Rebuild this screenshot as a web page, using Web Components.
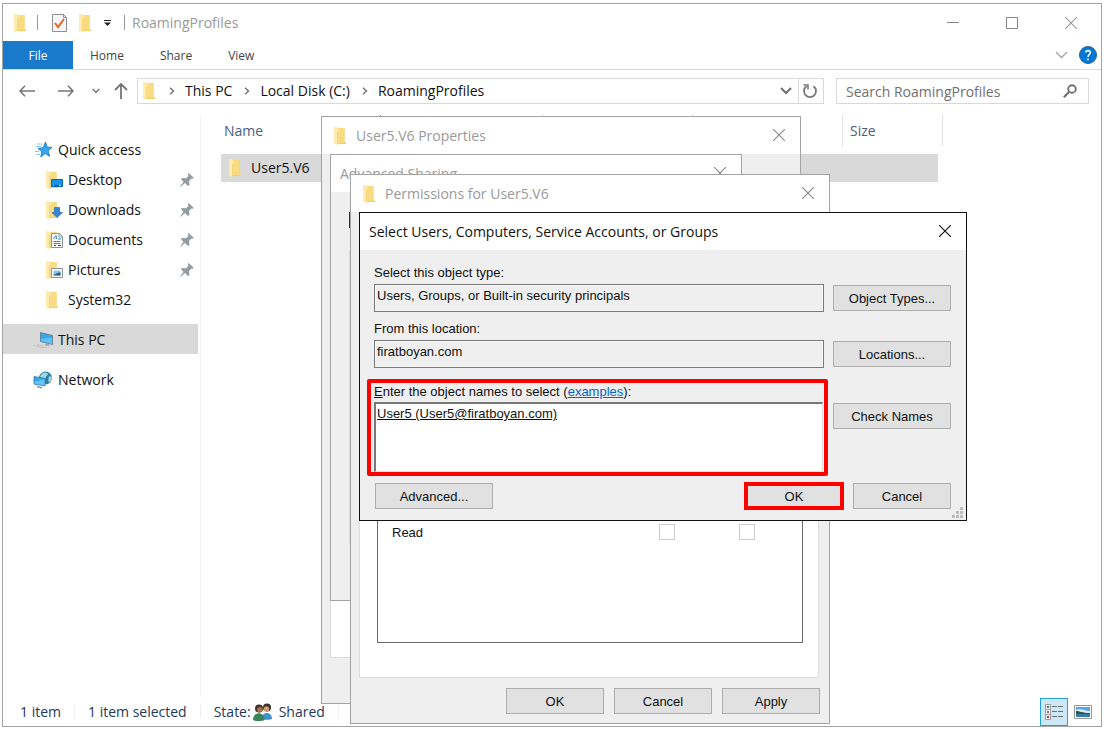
<!DOCTYPE html>
<html lang="en">
<head>
<meta charset="utf-8">
<title>RoamingProfiles</title>
<style>
  html, body { height: 100%; margin: 0; }
  body {
    box-sizing: border-box;
    padding: 3px 4px 2px 2px;
    background: #fff;
    color: #111;
    font: 14px/20px "Open Sans", "Noto Sans", sans-serif;
    --classic: 13px/16px "Liberation Sans", Arial, sans-serif;
    --frame: #a3a3a3;
    --face: #efefef;
  }
  dialog-window { position: absolute; }
  #properties { left: 321px; top: 116px; width: 480px; height: 588px; }
  #sharing { left: 330px; top: 154px; width: 412px; height: 447px; }
  #permissions { left: 350px; top: 174px; width: 480px; height: 550px; }
  #select { left: 359px; top: 212px; width: 608px; }
</style>
</head>
<body>
<file-explorer></file-explorer>

<dialog-window id="properties" heading="User5.V6 Properties" folder inactive>
  <properties-page></properties-page>
</dialog-window>
<dialog-window id="sharing" heading="Advanced Sharing" inactive>
  <sharing-page></sharing-page>
</dialog-window>
<dialog-window id="permissions" heading="Permissions for User5.V6" folder inactive>
  <permissions-page></permissions-page>
</dialog-window>
<dialog-window id="select" heading="Select Users, Computers, Service Accounts, or Groups">
  <object-picker></object-picker>
</dialog-window>

<script>
const BASE = '*{box-sizing:border-box} button{margin:0;padding:0;border:0;background:none;font:inherit;color:inherit} svg{display:block}';

function define(tag, css, html, setup) {
  const template = document.createElement('template');
  template.innerHTML = `<style>${BASE}${css}</style>${html}`;
  customElements.define(tag, class extends HTMLElement {
    connectedCallback() {
      if (this.shadowRoot) return;
      this.attachShadow({ mode: 'open' }).append(template.content.cloneNode(true));
      if (setup) setup(this, this.shadowRoot);
    }
  });
}

const FOLDER = '<path d="M3 1h7.500v14H12v2H3z" fill="#f3cf6a"/><path d="M4 1h6.500v14H12v1H4z" fill="#f9db82"/><path d="M0 0h3l1.500 2v13L3 18l-3-1z" fill="#ffebad"/><path d="M3 4l1.500 1v10L3 18z" fill="#f5d680"/>';
const ICONS = {
  folder: [12, 18, FOLDER],
  checkdoc: [15, 18, '<path d="M.5.500h11l3 3v14H.500z" fill="#f7f7fa" stroke="#8f8f8f"/><path d="M11.500.500v3h3" fill="none" stroke="#8f8f8f"/><path d="M3 9l3 4 6-8" fill="none" stroke="#f0601c" stroke-width="2"/>'],
  overflow: [7, 6, '<path d="M0 .500h7" stroke="#222"/><path d="M0 2.500h7L3.500 6z" fill="#222"/>'],
  min: [12, 12, '<path d="M0 5.500h12" stroke="#888"/>'],
  max: [12, 12, '<path d="M.5.500h11v11H.500z" fill="none" stroke="#888"/>'],
  close: [12, 12, '<path d="M0 0l12 12M12 0L0 12" stroke="currentColor" stroke-width="1.100"/>'],
  expand: [13, 8, '<path d="M1 1l5.500 5.500L12 1" fill="none" stroke="#a3a3a3" stroke-width="1.300"/>'],
  help: [18, 18, '<circle cx="9" cy="9" r="8.500" fill="#0078d7" stroke="#2a5f94"/><path d="M6.500 6.500C7 3.800 11.500 4 11.300 6.800 11.200 8.500 9 8.600 9 11M9 12.500v1.700" fill="none" stroke="#fff" stroke-width="1.600"/>'],
  back: [16, 12, '<path d="M6 .800L1 6l5 5.200M1 6h15" fill="none" stroke="#757575" stroke-width="1.600"/>'],
  forward: [16, 12, '<path d="M10 .800L15 6l-5 5.200M15 6H0" fill="none" stroke="#757575" stroke-width="1.600"/>'],
  recent: [8, 6, '<path d="M.7 1L4 4.400 7.300 1" fill="none" stroke="#777" stroke-width="1.500"/>'],
  up: [14, 16, '<path d="M1 7l6-6 6 6M7 1v15" fill="none" stroke="#757575" stroke-width="1.800"/>'],
  crumb: [6, 8, '<path d="M1 .700L4.500 4 1 7.300" fill="none" stroke="#777" stroke-width="1.500"/>'],
  down: [12, 8, '<path d="M1 1l5 5 5-5" fill="none" stroke="#707070" stroke-width="2"/>'],
  refresh: [16, 16, '<path d="M4.500 3.200A6 6 0 1 0 11.500 3.200" fill="none" stroke="#777" stroke-width="1.800"/><path d="M1.500 2h4.500v4.500" fill="none" stroke="#777" stroke-width="1.600"/>'],
  search: [14, 14, '<circle cx="9" cy="5" r="3.800" fill="none" stroke="#707070" stroke-width="1.900"/><path d="M6.300 7.700L.8 13.200" stroke="#707070" stroke-width="2.200"/>'],
  star: [17, 16, '<path d="M10.500 0l1.700 5 4.800.400-3.800 3.400 1.500 5.500-4.500-2.800L5.800 15l1-5.200L3 6.500l5-.800z" fill="#35a5ee" stroke="#1877bd" stroke-width=".8"/><path d="M2 2h5M1 4.500h5M0 9.500h4M1 12.500h4" stroke="#8cc8f0"/>'],
  desktop: [17, 18, FOLDER + '<path d="M5.500 8.500h11v7h-11z" fill="#1594f0" stroke="#0b68ad"/><path d="M6 14.500h10" stroke="#0a4f8c"/><path d="M7 14.500h1M13 14.500h2" stroke="#bfe2ff"/>'],
  downloads: [17, 18, FOLDER + '<path d="M8.500 6.500h5v5h3L11 16.500 6 11.500h2.500z" fill="#3385d9" stroke="#2767ad" stroke-width=".7"/>'],
  documents: [17, 18, FOLDER + '<path d="M5.500 2.500h8l3 3v11h-11z" fill="#fff" stroke="#84939c"/><path d="M13 3v3h3" fill="none" stroke="#84939c"/><path d="M7.500 8L10 4.500 10.500 8M12 8h3M7.500 10.500h7M7.500 12.500h7" fill="none" stroke="#258bd2"/><path d="M8 14.500h2M12 14.500h3" stroke="#345"/>'],
  pictures: [17, 18, FOLDER + '<path d="M5.500 7.500h11v9h-11z" fill="#fff" stroke="#899299"/><path d="M7.500 9.500h7v5h-7z" fill="#8dc6ed"/><path d="M7.500 13.500c3 0 3-2 7-2v3h-7z" fill="#245b78"/>'],
  pc: [20, 18, '<path d="M7.500 1.500L19.500 4.500V13.500L7.500 10.500z" fill="#38a8ed" stroke="#5c7888" stroke-width=".8"/><path d="M8 8L19 6.500V13L8 10z" fill="#62c0fa"/><path d="M12 12.200l4 1v2l-4-1z" fill="#9aa7ae"/><path d="M0 14l10 3 4-1M4 13.500l7 2" fill="none" stroke="#b4bcc1" stroke-width=".8"/>'],
  network: [20, 18, '<circle cx="12.500" cy="7" r="6.500" fill="#2f7f9f"/><path d="M9 2.500c3-2 6-1 6 1l-2 2-1 3-3-1-2-2zM16 5l3 1-1 4-3 1z" fill="#9fd7e6"/><path d="M1 5.500l11 2v7.500L1 13z" fill="#35a8ee" stroke="#3f7798" stroke-width=".8"/><path d="M1.500 11L11.500 8.300V14.500l-10-2z" fill="#66c3fa"/><path d="M4 15.500l5 1.500" stroke="#8a979e" stroke-width="1.500"/>'],
  pin: [14, 14, '<path d="M8.500 0L13.500 4.500 12.500 6 11.500 5.500 9 8l.5 4-1.500 1L5 10 1 13.500 0 13.500 3.500 9 1 6 2 5l4 .300L8.500 3 7.800 1z" fill="#919ca3"/>'],
  people: [20, 18, '<circle cx="14" cy="4.500" r="4" fill="#3b3028"/><circle cx="13.500" cy="6" r="2.700" fill="#d29b70"/><path d="M8.500 16c0-8 10.500-8 10.500 0-2 1-8.500 1-10.500 0z" fill="#3f91cf"/><circle cx="6" cy="5.500" r="4" fill="#40342b"/><circle cx="6.800" cy="6.800" r="2.700" fill="#ad7047"/><path d="M0 17c0-9 11.500-9 11.500 0-2 1.300-9.500 1.300-11.500 0z" fill="#35865a"/>'],
  details: [18, 16, '<path d="M.5.500h5v5h-5zM.500 5.500h5v5h-5zM.500 10.500h5v5h-5z" fill="#fff" stroke="#9a9a9a"/><path d="M2 3h2" stroke="#2e6f9e" stroke-width="2"/><path d="M2 8h2" stroke="#a95b3b" stroke-width="2"/><path d="M2 13h2" stroke="#c32626" stroke-width="2"/><path d="M7 2.500h5M13 2.500h5M7 7.500h5M13 7.500h5M7 12.500h5M13 12.500h5" stroke="#707070"/>'],
  thumbs: [18, 14, '<path d="M.5.500h17v13H.500z" fill="#fff" stroke="#999"/><path d="M2 2h14v10H2z" fill="#5ba4ea"/><path d="M2 5c5-2 8 1 14 1v3H2z" fill="#dcebf5"/><path d="M2 6c4 0 6 2 14 2v1H2z" fill="#275c4d"/><path d="M2 9h14v3H2z" fill="#3878aa"/>'],
  sort: [9, 5, '<path d="M.5 4.500l4-4 4 4" fill="none" stroke="#555"/>'],
  grip: [11, 11, '<path d="M8 0h3v3H8zM4 4h3v3H4zM8 4h3v3H8zM0 8h3v3H0zM4 8h3v3H4zM8 8h3v3H8z" fill="#bdbdbd"/>']
};

define('ui-icon', ':host{display:inline-block;flex:none}', '<svg aria-hidden="true"></svg>', (host, root) => {
  const [w, h, body] = ICONS[host.getAttribute('name')];
  const svg = root.querySelector('svg');
  svg.setAttribute('viewBox', `0 0 ${w} ${h}`);
  svg.setAttribute('width', w);
  svg.setAttribute('height', h);
  svg.innerHTML = body;
});

define('title-bar', `
  :host{display:flex;align-items:center;height:37px;padding:0 1px 0 11px;color:#999}
  i{width:1px;height:15px;background:#999}
  .quick{display:flex;align-items:center}
  .quick i:first-of-type{margin:0 14px 0 11px}
  .quick ui-icon:nth-of-type(3){margin:0 13px 0 12px}
  .quick i:last-of-type{margin:0 7px 0 13px}
  .controls{display:flex;margin-left:auto}
  button{width:59px;height:37px;display:grid;place-items:center}`, `
  <div class="quick">
    <ui-icon name="folder"></ui-icon><i></i><ui-icon name="checkdoc"></ui-icon>
    <ui-icon name="folder"></ui-icon><ui-icon name="overflow"></ui-icon><i></i>
  </div>
  <span>RoamingProfiles</span>
  <div class="controls">
    <button aria-label="Minimize"><ui-icon name="min"></ui-icon></button>
    <button aria-label="Maximize"><ui-icon name="max"></ui-icon></button>
    <button aria-label="Close"><ui-icon name="close"></ui-icon></button>
  </div>`);

define('ribbon-tabs', `
  :host{display:flex;align-items:stretch;height:29px;border-bottom:1px solid #dadada;font-size:12px;color:#444}
  button{padding:2px 19px 0 17px}
  .file{width:70px;padding:2px 0 0;background:#1979ca;color:#fff}
  .end{display:flex;align-items:center;gap:11px;margin-left:auto;padding-right:4px}
  .end button{display:grid;padding:0}`, `
  <button class="file">File</button><button>Home</button><button>Share</button><button>View</button>
  <div class="end">
    <button aria-label="Expand the ribbon"><ui-icon name="expand"></ui-icon></button>
    <button aria-label="Help"><ui-icon name="help"></ui-icon></button>
  </div>`);

define('address-row', `
  :host{display:grid;grid-template-columns:48px 30px 30px 20px minmax(0,1fr) 253px;align-items:center;height:40px;padding:2px 12px 0 0}
  button{display:grid;place-items:center;height:24px}
  .bar,.search{display:flex;align-items:center;height:26px;border:1px solid #d9d9d9}
  .bar{margin:0 12px 0 6px;padding-left:5px}
  .bar ui-icon[name=crumb]{margin:0 10px 0 12px}
  .bar ui-icon:nth-of-type(1){margin-right:2px}
  .drop{margin-left:auto;width:23px}
  .refresh{width:25px;border-left:1px solid #d9d9d9}
  .search{padding:0 11px 0 9px}
  input{flex:1;min-width:0;height:22px;padding:0;border:0;outline:0;font:inherit}
  input::placeholder{color:#707070;opacity:1}`, `
  <button aria-label="Back"><ui-icon name="back"></ui-icon></button>
  <button aria-label="Forward"><ui-icon name="forward"></ui-icon></button>
  <button aria-label="Recent locations"><ui-icon name="recent"></ui-icon></button>
  <button aria-label="Up"><ui-icon name="up"></ui-icon></button>
  <div class="bar">
    <ui-icon name="folder"></ui-icon><ui-icon name="crumb"></ui-icon><span>This PC</span>
    <ui-icon name="crumb"></ui-icon><span>Local Disk (C:)</span>
    <ui-icon name="crumb"></ui-icon><span>RoamingProfiles</span>
    <button class="drop" aria-label="Previous locations"><ui-icon name="down"></ui-icon></button>
    <button class="refresh" aria-label="Refresh"><ui-icon name="refresh"></ui-icon></button>
  </div>
  <div class="search">
    <input type="text" aria-label="Search RoamingProfiles" placeholder="Search RoamingProfiles">
    <ui-icon name="search"></ui-icon>
  </div>`);

define('nav-item', `
  :host{display:flex;align-items:center;box-sizing:border-box;height:30px;padding:2px 4px 0 30px}
  :host([nested]){padding-left:43px}
  :host([selected]){background:#d9d9d9}
  .icon{display:flex;width:20px;margin-right:5px;justify-content:center}
  :host([nested]) .icon{width:17px;justify-content:flex-start}
  .pin{display:none;margin-left:auto}
  :host([pinned]) .pin{display:block}`, `
  <span class="icon"></span><slot></slot><ui-icon class="pin" name="pin"></ui-icon>`, (host, root) => {
  const icon = document.createElement('ui-icon');
  icon.setAttribute('name', host.getAttribute('icon'));
  root.querySelector('.icon').append(icon);
});

define('nav-pane', `
  :host{display:block;width:195px;padding-top:24px}
  .group{display:block;margin-bottom:10px}`, `
  <nav>
    <div class="group">
      <nav-item icon="star">Quick access</nav-item>
      <nav-item icon="desktop" nested pinned>Desktop</nav-item>
      <nav-item icon="downloads" nested pinned>Downloads</nav-item>
      <nav-item icon="documents" nested pinned>Documents</nav-item>
      <nav-item icon="pictures" nested pinned>Pictures</nav-item>
      <nav-item icon="folder" nested>System32</nav-item>
    </div>
    <div class="group"><nav-item icon="pc" selected>This PC</nav-item></div>
    <div class="group"><nav-item icon="network">Network</nav-item></div>
  </nav>`);

define('file-list', `
  :host{display:block;flex:1;min-width:0;margin:4px 0 0 2px;padding-left:20px;border-left:1px solid #f3f3f3}
  table{width:722px;table-layout:fixed;border-spacing:0}
  th{position:relative;height:32px;padding:2px 0 0 7px;border-right:1px solid #e2e2e2;font-weight:400;text-align:left;color:#4c607a}
  th:first-child{padding-left:3px;border-right:0}
  th:nth-child(2){border-left:1px solid #e2e2e2}
  th ui-icon{position:absolute;left:155px;top:1px}
  td{height:36px;padding:0;border-top:8px solid #fff;background:#d9d9d9}
  td:last-child{border-right:5px solid #fff}
  .name{display:flex;align-items:center;gap:10px;padding-left:8px}`, `
  <table>
    <colgroup><col style="width:321px"><col style="width:151px"><col style="width:150px"><col style="width:100px"></colgroup>
    <thead><tr><th>Name<ui-icon name="sort"></ui-icon></th><th></th><th></th><th>Size</th></tr></thead>
    <tbody><tr><td><span class="name"><ui-icon name="folder"></ui-icon>User5.V6</span></td><td></td><td></td><td></td></tr></tbody>
  </table>`);

define('status-bar', `
  :host{display:flex;align-items:center;height:29px;padding:0 3px 0 17px;color:#1e395b}
  span{display:flex;align-items:center}
  span::after{content:"";width:1px;height:13px;margin:0 13px;background:#eee}
  ui-icon[name=people]{margin:0 6px 0 2px}
  .views{display:flex;align-items:center;margin-left:auto}
  button{display:grid;place-items:center;height:28px;width:30px}
  .active{width:28px;background:#cce8f6;border:1px solid #26a0da}`, `
  <span>1 item</span><span>1 item selected</span><span>State:<ui-icon name="people"></ui-icon>Shared</span>
  <div class="views">
    <button class="active" aria-label="Details"><ui-icon name="details"></ui-icon></button>
    <button aria-label="Large thumbnails"><ui-icon name="thumbs"></ui-icon></button>
  </div>`);

define('file-explorer', `
  :host{display:flex;flex-direction:column;height:100%;border:1px solid var(--frame);box-sizing:border-box}
  .panes{display:flex;flex:1;min-height:0}`, `
  <title-bar></title-bar>
  <ribbon-tabs></ribbon-tabs>
  <address-row></address-row>
  <div class="panes"><nav-pane></nav-pane><file-list></file-list></div>
  <status-bar></status-bar>`);

define('dialog-window', `
  :host{display:flex;flex-direction:column;box-sizing:border-box;border:1px solid #111;background:var(--face);color:#111}
  :host([inactive]){border-color:var(--frame)}
  header{display:flex;align-items:center;height:37px;padding:0 15px 0 9px;background:#fff}
  :host([folder]) header{padding-left:12px}
  :host([inactive]) header{color:#999}
  h2{flex:1;margin:0;font:inherit}
  header ui-icon[name=folder]{display:none;margin-right:10px}
  :host([folder]) header ui-icon[name=folder]{display:block}
  :host([inactive]) button{color:#888}`, `
  <header><ui-icon name="folder"></ui-icon><h2></h2>
    <button aria-label="Close"><ui-icon name="close"></ui-icon></button></header>
  <slot></slot>`, (host, root) => {
  root.querySelector('h2').textContent = host.getAttribute('heading');
});

define('push-button', `
  :host{display:block;width:98px}
  :host([wide]){width:118px}
  button{display:block;width:100%;height:26px;padding-top:2px;border:1px solid #adadad;background:#e1e1e1;font:var(--classic)}
  :host([marked]) button{outline:4px solid #f00;outline-offset:-3px}`, '<button><slot></slot></button>');

define('properties-page', `
  :host{display:block;flex:1;margin:60px 8px 45px;border:1px solid #dcdcdc;background:#fff}`, '');

define('sharing-page', `
  :host{display:block;flex:1;padding:20px 18px 56px;font:var(--classic)}
  input{appearance:none;display:block;width:16px;height:16px;margin:0 0 22px;border:1px solid #333;background:#fff}
  div{height:294px;border:1px solid #dcdcdc}`, `
  <input type="checkbox" aria-label="Share this folder"><div></div>`);

define('permissions-page', `
  :host{display:flex;flex:1;flex-direction:column;padding:22px 9px 9px 8px;font:var(--classic)}
  .page{display:flex;flex:1;flex-direction:column;justify-content:flex-end;margin-right:1px;padding:0 15px 34px 17px;border:1px solid #dcdcdc;background:#fff}
  .list{height:143px;padding-top:21px;border:1px solid #6a6a6a}
  table{width:100%;table-layout:fixed;border-spacing:0}
  th,td{height:20px;padding:0;font-weight:400;text-align:left}
  th{padding:2px 0 0 14px}
  input{appearance:none;display:block;width:16px;height:16px;margin:0;border:1px solid #ccc;background:#fff}
  footer{display:flex;justify-content:flex-end;gap:10px;margin-top:10px}`, `
  <div class="page"><div class="list"><table>
    <colgroup><col style="width:281px"><col style="width:80px"><col></colgroup>
    <tbody><tr><th scope="row">Read</th>
      <td><input type="checkbox" disabled aria-label="Allow Read"></td>
      <td><input type="checkbox" disabled aria-label="Deny Read"></td></tr></tbody>
  </table></div></div>
  <footer><push-button>OK</push-button><push-button>Cancel</push-button><push-button>Apply</push-button></footer>`);

define('object-picker', `
  :host{display:block;position:relative;padding:14px 15px 11px 14px;font:var(--classic)}
  .fields{display:grid;grid-template-columns:minmax(0,1fr) 118px;column-gap:9px;row-gap:8px}
  label{display:block;line-height:18px;margin-bottom:2px}
  .fields push-button{align-self:end;margin-bottom:1px}
  input,textarea{display:block;width:100%;margin:0;border-radius:0;outline:0;font:inherit;color:inherit}
  input{height:28px;padding:0 2px 6px;border:1px solid #7a7a7a;background:var(--face);box-shadow:inset 0 0 0 1px #f8f8f8}
  .names{margin:3px -4px 0 -7px;padding:0 1px 0 3px;border:4px solid #f00;border-radius:2px}
  .names label{line-height:17px}
  textarea{height:70px;padding:2px 1px;resize:none;border:1px solid #e0e0e0;border-top:2px solid #777;border-left:2px solid #777;background:#fff;text-decoration:underline;overflow:hidden}
  a{color:#0563c7}
  .fields push-button.check{align-self:start;margin-top:27px}
  footer{display:flex;gap:10px;margin-top:7px;padding-left:1px}
  footer push-button:nth-child(1){margin-right:auto}
  .grip{position:absolute;right:3px;bottom:2px}`, `
  <div class="fields">
    <div><label for="type">Select this object type:</label>
      <input id="type" type="text" readonly value="Users, Groups, or Built-in security principals"></div>
    <push-button wide>Object Types...</push-button>
    <div><label for="place">From this location:</label>
      <input id="place" type="text" readonly value="firatboyan.com"></div>
    <push-button wide>Locations...</push-button>
    <div class="names"><label for="names"><u>E</u>nter the object names to select (<a href="#examples">examples</a>):</label>
      <textarea id="names" spellcheck="false">User5 (User5@firatboyan.com)</textarea></div>
    <push-button wide class="check">Check Names</push-button>
  </div>
  <footer><push-button wide>Advanced...</push-button><push-button marked>OK</push-button><push-button>Cancel</push-button></footer>
  <ui-icon class="grip" name="grip"></ui-icon>`);
</script>
</body>
</html>
